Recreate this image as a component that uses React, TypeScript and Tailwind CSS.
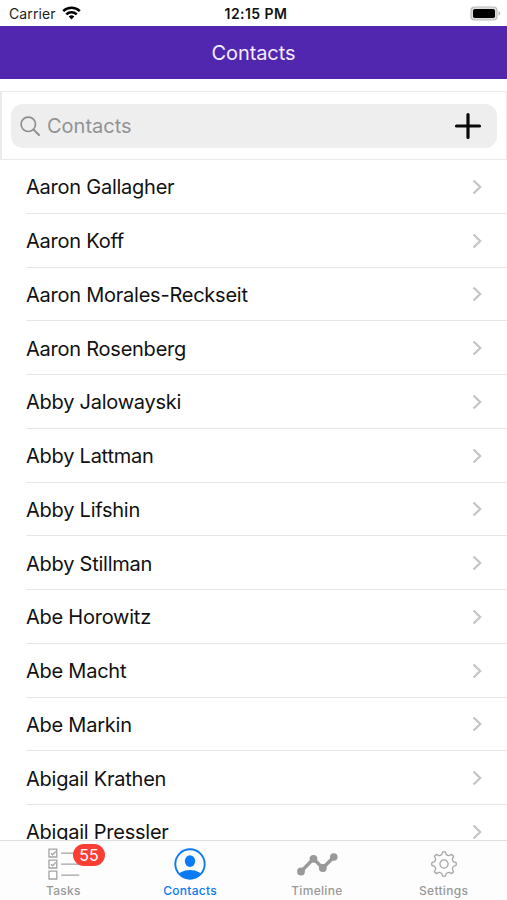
import type { ReactNode } from 'react';

const CONTACTS = [
  'Aaron Gallagher',
  'Aaron Koff',
  'Aaron Morales-Reckseit',
  'Aaron Rosenberg',
  'Abby Jalowayski',
  'Abby Lattman',
  'Abby Lifshin',
  'Abby Stillman',
  'Abe Horowitz',
  'Abe Macht',
  'Abe Markin',
  'Abigail Krathen',
  'Abigail Pressler',
];

// One tooth of the gear pointing up, then the rounded valley to the next one
const TOOTH = [[-1.3, -12.2], [1.3, -12.2], [2, -11], [2.1, -9.7], [3.7, -8.1], [5.3, -8.4]];

const gearPath = Array.from({ length: 8 }, (_, i) => {
  const a = (i * Math.PI) / 4;
  const [tl, tr, c1, side, valley, end] = TOOTH.map(([x, y]) => {
    const px = x * Math.cos(a) - y * Math.sin(a);
    const py = x * Math.sin(a) + y * Math.cos(a);
    return `${px.toFixed(2)} ${py.toFixed(2)}`;
  });
  return `${i === 0 ? 'M' : 'L'}${tl}L${tr}Q${c1} ${side}Q${valley} ${end}`;
}).join('');

function StatusBar() {
  return (
    <div className="grid h-[25.5px] shrink-0 grid-cols-3 items-center pl-[9px] pr-[6px] pt-[2px] text-[14px] text-[#222]">
      <div className="flex items-center gap-[6px]">
        <span className="tracking-[0.1px]">Carrier</span>
        <svg width="19" height="14" viewBox="0 0 19 14" fill="none" stroke="#000" strokeWidth="2.5" className="-mt-[2px]">
          <path d="M1.2 5.2a11.8 11.8 0 0 1 16.6 0" />
          <path d="M4.3 8.3a7.4 7.4 0 0 1 10.4 0" />
          <path d="M9.5 13.4 6.7 10.6a4 4 0 0 1 5.6 0Z" fill="#000" stroke="none" />
        </svg>
      </div>
      <div className="-mr-[2px] text-center font-semibold tracking-[0.45px] text-[#111]">12:15 PM</div>
      <svg width="31" height="15" viewBox="0 0 31 15" className="-mt-[1px] justify-self-end">
        <rect x="1" y="1" width="26" height="13" rx="3.5" fill="#ddd" stroke="#bbb" strokeWidth="1.2" />
        <rect x="3" y="3" width="22" height="9" rx="1.8" fill="#000" />
        <path d="M28.5 5.3c2.4.6 2.4 3.8 0 4.4Z" fill="#bbb" />
      </svg>
    </div>
  );
}

function SearchBox() {
  return (
    <div className="mt-[12px] h-[69px] shrink-0 border-y-[1.5px] border-l-2 border-r border-[#e9eaea] px-[9px] pt-[12px]">
      <div className="flex h-[44px] items-center rounded-[12px] bg-[#eeeeee] pl-[9px] pr-[15px]">
        <svg width="21" height="21" viewBox="0 0 21 21" fill="none" stroke="#8e8e93" strokeWidth="1.7" strokeLinecap="round">
          <circle cx="8.3" cy="8.3" r="7.2" />
          <path d="m13.6 13.6 5.4 5.4" strokeWidth="2" />
        </svg>
        <span className="ml-[6px] flex-1 text-[20px] text-[#929296]">Contacts</span>
        <svg width="28" height="28" viewBox="0 0 28 28" stroke="#0a0a0a" strokeWidth="3.2" strokeLinecap="round">
          <path d="M14 2.5v23M2.5 14h23" />
        </svg>
      </div>
    </div>
  );
}

function ContactRow({ name }: { name: string }) {
  return (
    <div className="flex h-[53.75px] shrink-0 pl-[26px]">
      <div className="flex flex-1 items-center justify-between border-b border-[#e6e6e6] pr-[25px] pt-[2px]">
        <span className="text-[20px] tracking-[-0.24px] text-[#111]">{name}</span>
        <svg width="10" height="16" viewBox="0 0 10 16" fill="none" stroke="#c4c4c6" strokeWidth="2.2" className="-mt-px">
          <path d="m1.5 1.5 6.7 6.5-6.7 6.5" />
        </svg>
      </div>
    </div>
  );
}

function TabItem({ label, active, children }: { label: string; active?: boolean; children: ReactNode }) {
  return (
    <div className={`relative flex flex-col items-center ${active ? 'text-[#0b7af5]' : 'text-[#999]'}`}>
      <div className="flex h-[42px] items-center pt-[3px]">{children}</div>
      <span className="text-[12px] font-medium leading-[15px] tracking-[0.3px]">{label}</span>
    </div>
  );
}

function TabBar() {
  return (
    <div className="grid h-[60px] shrink-0 grid-cols-4 border-t border-[#dedede] bg-[#fdfdfd]">
      <TabItem label="Tasks">
        <svg width="32" height="32" viewBox="0 0 32 32" fill="none" stroke="#a3a3a3" strokeWidth="1.3" className="ml-[2px]">
          <path d="M1 1.2h7.8v7.8H1zM1 12.2h7.8V20H1zM1 23.2h7.8V31H1z" />
          <path d="m3 5.1 1.6 1.7 3.2-3.4M3 16.1l1.6 1.7 3.2-3.4M13.2 5.2h18M13.2 16.2h18M13.2 27.2h18" />
        </svg>
        <span className="absolute left-[73px] top-[3px] flex h-[22px] w-[32px] items-center justify-center rounded-full bg-[#fc3d34] text-[16px] text-white">
          55
        </span>
      </TabItem>
      <TabItem label="Contacts" active>
        <svg width="32" height="32" viewBox="0 0 32 32">
          <clipPath id="face">
            <circle cx="16" cy="16" r="14.5" />
          </clipPath>
          <circle cx="16" cy="16" r="14.7" fill="none" stroke="#0b7af5" strokeWidth="1.9" />
          <ellipse cx="16" cy="13.1" rx="5.2" ry="5.8" fill="#0b7af5" />
          <ellipse cx="16" cy="29.7" rx="12.8" ry="7.8" fill="#0b7af5" clipPath="url(#face)" />
        </svg>
      </TabItem>
      <TabItem label="Timeline">
        <svg width="42" height="24" viewBox="0 0 42 24" fill="#999" stroke="#999">
          <path d="M5 19.5 17.5 6.8l9.3 9.2L37.8 5" fill="none" strokeWidth="3.4" />
          <g stroke="none">
            <circle cx="5" cy="19.5" r="3.9" />
            <circle cx="17.5" cy="6.8" r="3.9" />
            <circle cx="26.8" cy="16" r="3.9" />
            <circle cx="37.8" cy="5" r="3.8" />
          </g>
        </svg>
      </TabItem>
      <TabItem label="Settings">
        <svg width="28" height="28" viewBox="-14 -14 28 28" fill="none" stroke="#a6a6a6" strokeWidth="1.3" strokeLinejoin="round">
          <path d={`${gearPath}Z`} />
          <circle r="4.1" />
        </svg>
      </TabItem>
    </div>
  );
}

export default function App() {
  return (
    <div className="flex h-[900px] w-[507px] flex-col overflow-hidden bg-white font-[Inter,'Liberation_Sans',sans-serif]">
      <StatusBar />
      <div className="flex h-[53.5px] shrink-0 items-center justify-center bg-[#5127b0] pt-[2px] text-[20px] tracking-[-0.1px] text-[#f4edff]">
        Contacts
      </div>
      <SearchBox />
      <div className="flex min-h-0 flex-1 flex-col overflow-hidden">
        {CONTACTS.map((name) => (
          <ContactRow key={name} name={name} />
        ))}
      </div>
      <TabBar />
    </div>
  );
}
